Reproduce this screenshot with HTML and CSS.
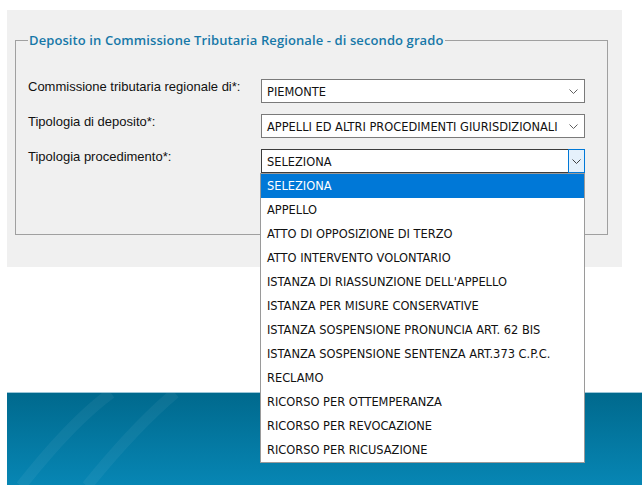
FILE: index.html
```html
<!DOCTYPE html>
<html lang="it">
<head>
  <meta charset="UTF-8">
  <title>Deposito in Commissione Tributaria Regionale</title>
  <link rel="stylesheet" href="styles.css">
</head>
<body>
  <div class="panel">
    <fieldset class="box">
      <legend>Deposito in Commissione Tributaria Regionale - di secondo grado</legend>

      <div class="row">
        <label>Commissione tributaria regionale di*:</label>
        <div class="combo">
          <span>PIEMONTE</span>
          <svg class="chev" width="9" height="5" viewBox="0 0 9 5"><path d="M0.5 0.5 L4.5 4.5 L8.5 0.5" fill="none" stroke="#606060"/></svg>
        </div>
      </div>

      <div class="row">
        <label>Tipologia di deposito*:</label>
        <div class="combo">
          <span>APPELLI ED ALTRI PROCEDIMENTI GIURISDIZIONALI</span>
          <svg class="chev" width="9" height="5" viewBox="0 0 9 5"><path d="M0.5 0.5 L4.5 4.5 L8.5 0.5" fill="none" stroke="#606060"/></svg>
        </div>
      </div>

      <div class="row">
        <label>Tipologia procedimento*:</label>
        <div class="combo open">
          <span>SELEZIONA</span>
          <div class="btn">
            <svg width="9" height="5" viewBox="0 0 9 5"><path d="M0.5 0.5 L4.5 4.5 L8.5 0.5" fill="none" stroke="#404040"/></svg>
          </div>
          <ul class="list">
            <li class="sel">SELEZIONA</li>
            <li>APPELLO</li>
            <li>ATTO DI OPPOSIZIONE DI TERZO</li>
            <li>ATTO INTERVENTO VOLONTARIO</li>
            <li>ISTANZA DI RIASSUNZIONE DELL'APPELLO</li>
            <li>ISTANZA PER MISURE CONSERVATIVE</li>
            <li>ISTANZA SOSPENSIONE PRONUNCIA ART. 62 BIS</li>
            <li>ISTANZA SOSPENSIONE SENTENZA ART.373 C.P.C.</li>
            <li>RECLAMO</li>
            <li>RICORSO PER OTTEMPERANZA</li>
            <li>RICORSO PER REVOCAZIONE</li>
            <li>RICORSO PER RICUSAZIONE</li>
          </ul>
        </div>
      </div>
    </fieldset>
  </div>

  <div class="footer">
    <svg class="arcs" width="200" height="93" viewBox="0 0 200 93">
      <path d="M14 93 C40 60 70 25 104 0" fill="none" stroke="#ffffff" stroke-opacity="0.05" stroke-width="11"/>
      <path d="M80 93 C105 62 135 28 168 0" fill="none" stroke="#ffffff" stroke-opacity="0.05" stroke-width="11"/>
    </svg>
  </div>
</body>
</html>
```

FILE: styles.css
```css
body { margin: 0; background: #fff; font-family: "Liberation Sans", Arial, sans-serif; }

.panel { margin: 10px 20px 0 7px; height: 235px; padding-top: 22px; background: #f0f0f0; }

.box { margin: 0 14px 0 8px; padding: 0 0 0 12px; height: 201px; border: 1px solid #a0a0a0; }
.box legend { padding: 0 1px; font: 600 13px/16px "Open Sans", sans-serif; letter-spacing: 0.1px; color: #1778a8; }

.row { display: grid; grid-template-columns: 233px 324px; margin-top: 11px; }
.row:first-of-type { margin-top: 31px; }
.row label { font-size: 13px; line-height: 15px; color: #111; }

.combo { position: relative; height: 22px; border: 1px solid #7a7a7a; background: #fff; display: flex; align-items: center; padding-left: 5px;
  font: 12.7px "DejaVu Sans Condensed", "DejaVu Sans", sans-serif; color: #111; }
.combo .chev { position: absolute; right: 6px; top: 9px; }
.combo.open { border-color: #3c3c3c; }
.combo .btn { position: absolute; right: -1px; top: -1px; width: 15px; height: 22px; border: 1px solid #0078d7; background: #e5f1fb; display: flex; align-items: center; justify-content: center; }

.list { position: absolute; left: -2px; top: 23px; width: 323px; margin: 0; padding: 0; list-style: none; background: #fff; border: 1px solid #9a9a9a; z-index: 2; }
.list li { height: 24px; line-height: 24px; padding-left: 6px; }
.list li.sel { background: #0078d7; color: #fff; }

.footer { position: relative; margin: 125px 0 0 7px; height: 92px; border-top: 1px solid #9cc6d8;
  background: linear-gradient(#00698d, #0786b4); overflow: hidden; }
.arcs { position: absolute; left: 0; top: 0; }
```
